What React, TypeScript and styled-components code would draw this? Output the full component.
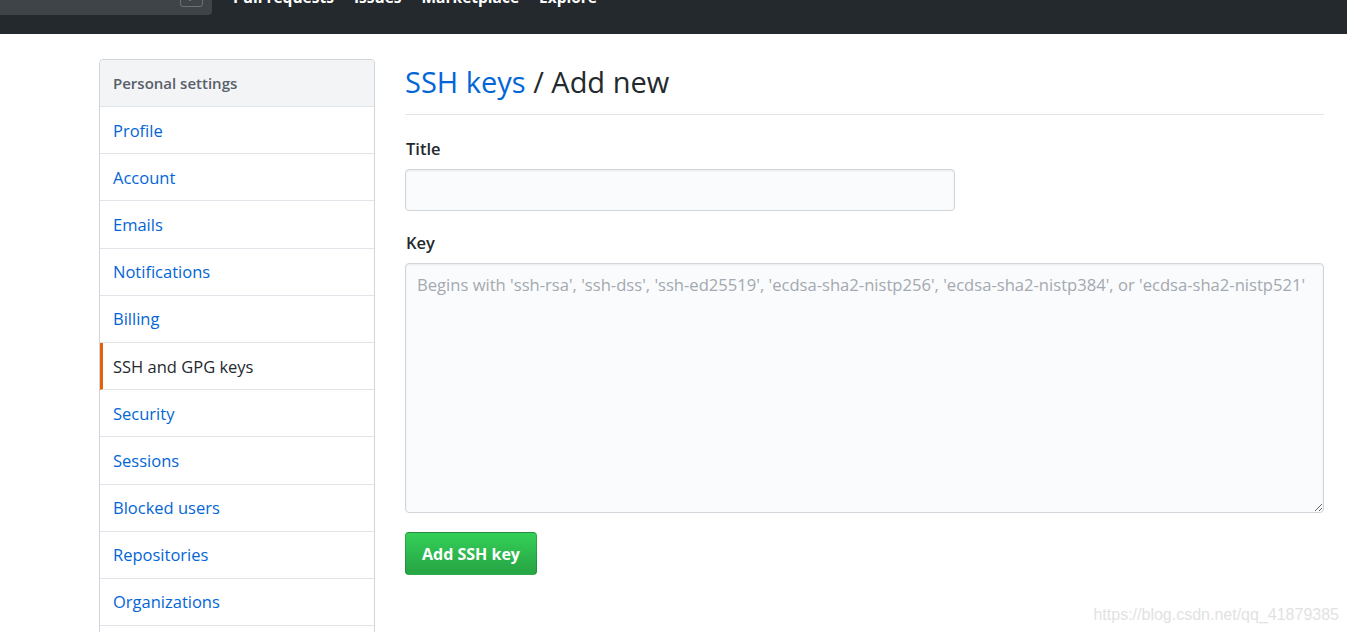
import styled, { createGlobalStyle } from "styled-components";

const GlobalStyle = createGlobalStyle`
  * { box-sizing: border-box; }
  body {
    margin: 0;
    background: #fff;
    font-family: "Open Sans", "Noto Sans", sans-serif;
    color: #24292e;
  }
`;

const navLinks = ["Pull requests", "Issues", "Marketplace", "Explore"];

const menuItems = [
  "Profile",
  "Account",
  "Emails",
  "Notifications",
  "Billing",
  "SSH and GPG keys",
  "Security",
  "Sessions",
  "Blocked users",
  "Repositories",
  "Organizations",
  "Saved replies",
];

export default function App() {
  return (
    <Page>
      <GlobalStyle />
      <Header>
        <Search>
          <SlashKey>/</SlashKey>
        </Search>
        <Nav>
          {navLinks.map((l) => (
            <NavLink key={l}>{l}</NavLink>
          ))}
        </Nav>
      </Header>

      <Layout>
        <Menu>
          <MenuHeading>Personal settings</MenuHeading>
          {menuItems.map((item) => (
            <MenuItem key={item} selected={item === "SSH and GPG keys"}>
              {item}
            </MenuItem>
          ))}
        </Menu>

        <Main>
          <PageTitle>
            <TitleLink>SSH keys</TitleLink> / Add new
          </PageTitle>
          <Field>
            <Label>Title</Label>
            <TitleInput />
          </Field>
          <Field>
            <Label>Key</Label>
            <KeyArea placeholder="Begins with 'ssh-rsa', 'ssh-dss', 'ssh-ed25519', 'ecdsa-sha2-nistp256', 'ecdsa-sha2-nistp384', or 'ecdsa-sha2-nistp521'" />
          </Field>
          <SubmitButton>Add SSH key</SubmitButton>
        </Main>
      </Layout>

      <Watermark>https://blog.csdn.net/qq_41879385</Watermark>
    </Page>
  );
}

const Page = styled.div`
  position: relative;
  height: 632px;
  overflow: hidden;
`;

const Header = styled.header`
  height: 34px;
  background: #24292e;
  display: flex;
  align-items: flex-start;
  overflow: hidden;
`;

const Search = styled.div`
  width: 212px;
  height: 15px;
  background: #3f4448;
  border-bottom-right-radius: 4px;
  position: relative;
  flex-shrink: 0;
`;

const SlashKey = styled.span`
  position: absolute;
  left: 180px;
  top: -14px;
  width: 23px;
  height: 21px;
  border: 1px solid #6a737d;
  border-radius: 3px;
  color: #959da5;
  font-size: 12px;
  display: flex;
  align-items: center;
  justify-content: center;
`;

const Nav = styled.nav`
  display: flex;
  gap: 20px;
  margin-left: 21px;
  margin-top: -14px;
`;

const NavLink = styled.span`
  color: #fff;
  font-weight: 700;
  font-size: 15.5px;
  line-height: 22px;
  white-space: nowrap;
`;

const Layout = styled.div`
  display: flex;
  gap: 30px;
  padding: 25px 23px 0 99px;
`;

const Menu = styled.nav`
  width: 276px;
  flex-shrink: 0;
  border: 1px solid #d1d5da;
  border-radius: 4px;
  display: flex;
  flex-direction: column;
`;

const MenuHeading = styled.div`
  height: 47px;
  padding: 0 13px;
  display: flex;
  align-items: center;
  background: #f3f4f6;
  color: #586069;
  font-weight: 600;
  font-size: 15px;
  border-bottom: 1px solid #e1e4e8;
  border-radius: 4px 4px 0 0;
`;

const MenuItem = styled.a<{ selected?: boolean }>`
  height: 47.2px;
  padding: 0 13px 0 ${(p) => (p.selected ? "10px" : "13px")};
  display: flex;
  align-items: center;
  font-size: 16.5px;
  color: ${(p) => (p.selected ? "#24292e" : "#0366d6")};
  font-weight: ${(p) => (p.selected ? 500 : 400)};
  border-bottom: 1px solid #e1e4e8;
  border-left: ${(p) => (p.selected ? "3px solid #e36209" : "none")};
  cursor: pointer;
`;

const Main = styled.main`
  flex: 1;
  display: flex;
  flex-direction: column;
  align-items: flex-start;
`;

const PageTitle = styled.h2`
  align-self: stretch;
  margin: 0 0 22px;
  padding: 3px 0 12px 0;
  font-size: 29px;
  font-weight: 400;
  line-height: 40px;
  color: #24292e;
  border-bottom: 1px solid #e1e4e8;
`;

const TitleLink = styled.a`
  color: #0366d6;
`;

const Field = styled.div`
  display: flex;
  flex-direction: column;
  gap: 8px;
  margin-bottom: 20px;
  align-self: stretch;
`;

const Label = styled.label`
  font-weight: 600;
  font-size: 16.5px;
  line-height: 24px;
  padding-left: 1px;
`;

const TitleInput = styled.input`
  width: 550px;
  height: 42px;
  background: #fafbfc;
  border: 1px solid #d1d5da;
  border-radius: 4px;
  box-shadow: inset 0 1px 2px rgba(27, 31, 35, 0.075);
  font-size: 16px;
  padding: 0 11px;
`;

const KeyArea = styled.textarea`
  width: 100%;
  height: 250px;
  background: #fafbfc;
  border: 1px solid #d1d5da;
  border-radius: 4px;
  box-shadow: inset 0 1px 2px rgba(27, 31, 35, 0.075);
  font-family: "Open Sans", "Noto Sans", sans-serif;
  font-size: 16.6px;
  line-height: 22px;
  padding: 10px 11px;
  resize: vertical;
  &::placeholder {
    color: #a3a9b0;
  }
`;

const SubmitButton = styled.button`
  margin-top: -1px;
  height: 43px;
  padding: 0 16px;
  border: 1px solid rgba(27, 31, 35, 0.2);
  border-radius: 4px;
  background: linear-gradient(-180deg, #34d058 0%, #28a745 90%);
  color: #fff;
  font-family: "Open Sans", "Noto Sans", sans-serif;
  font-weight: 700;
  font-size: 16px;
  cursor: pointer;
`;

const Watermark = styled.div`
  position: absolute;
  right: 8px;
  bottom: 8px;
  font-family: "Liberation Sans", Arial, sans-serif;
  font-size: 16px;
  color: #e2e2e2;
`;
